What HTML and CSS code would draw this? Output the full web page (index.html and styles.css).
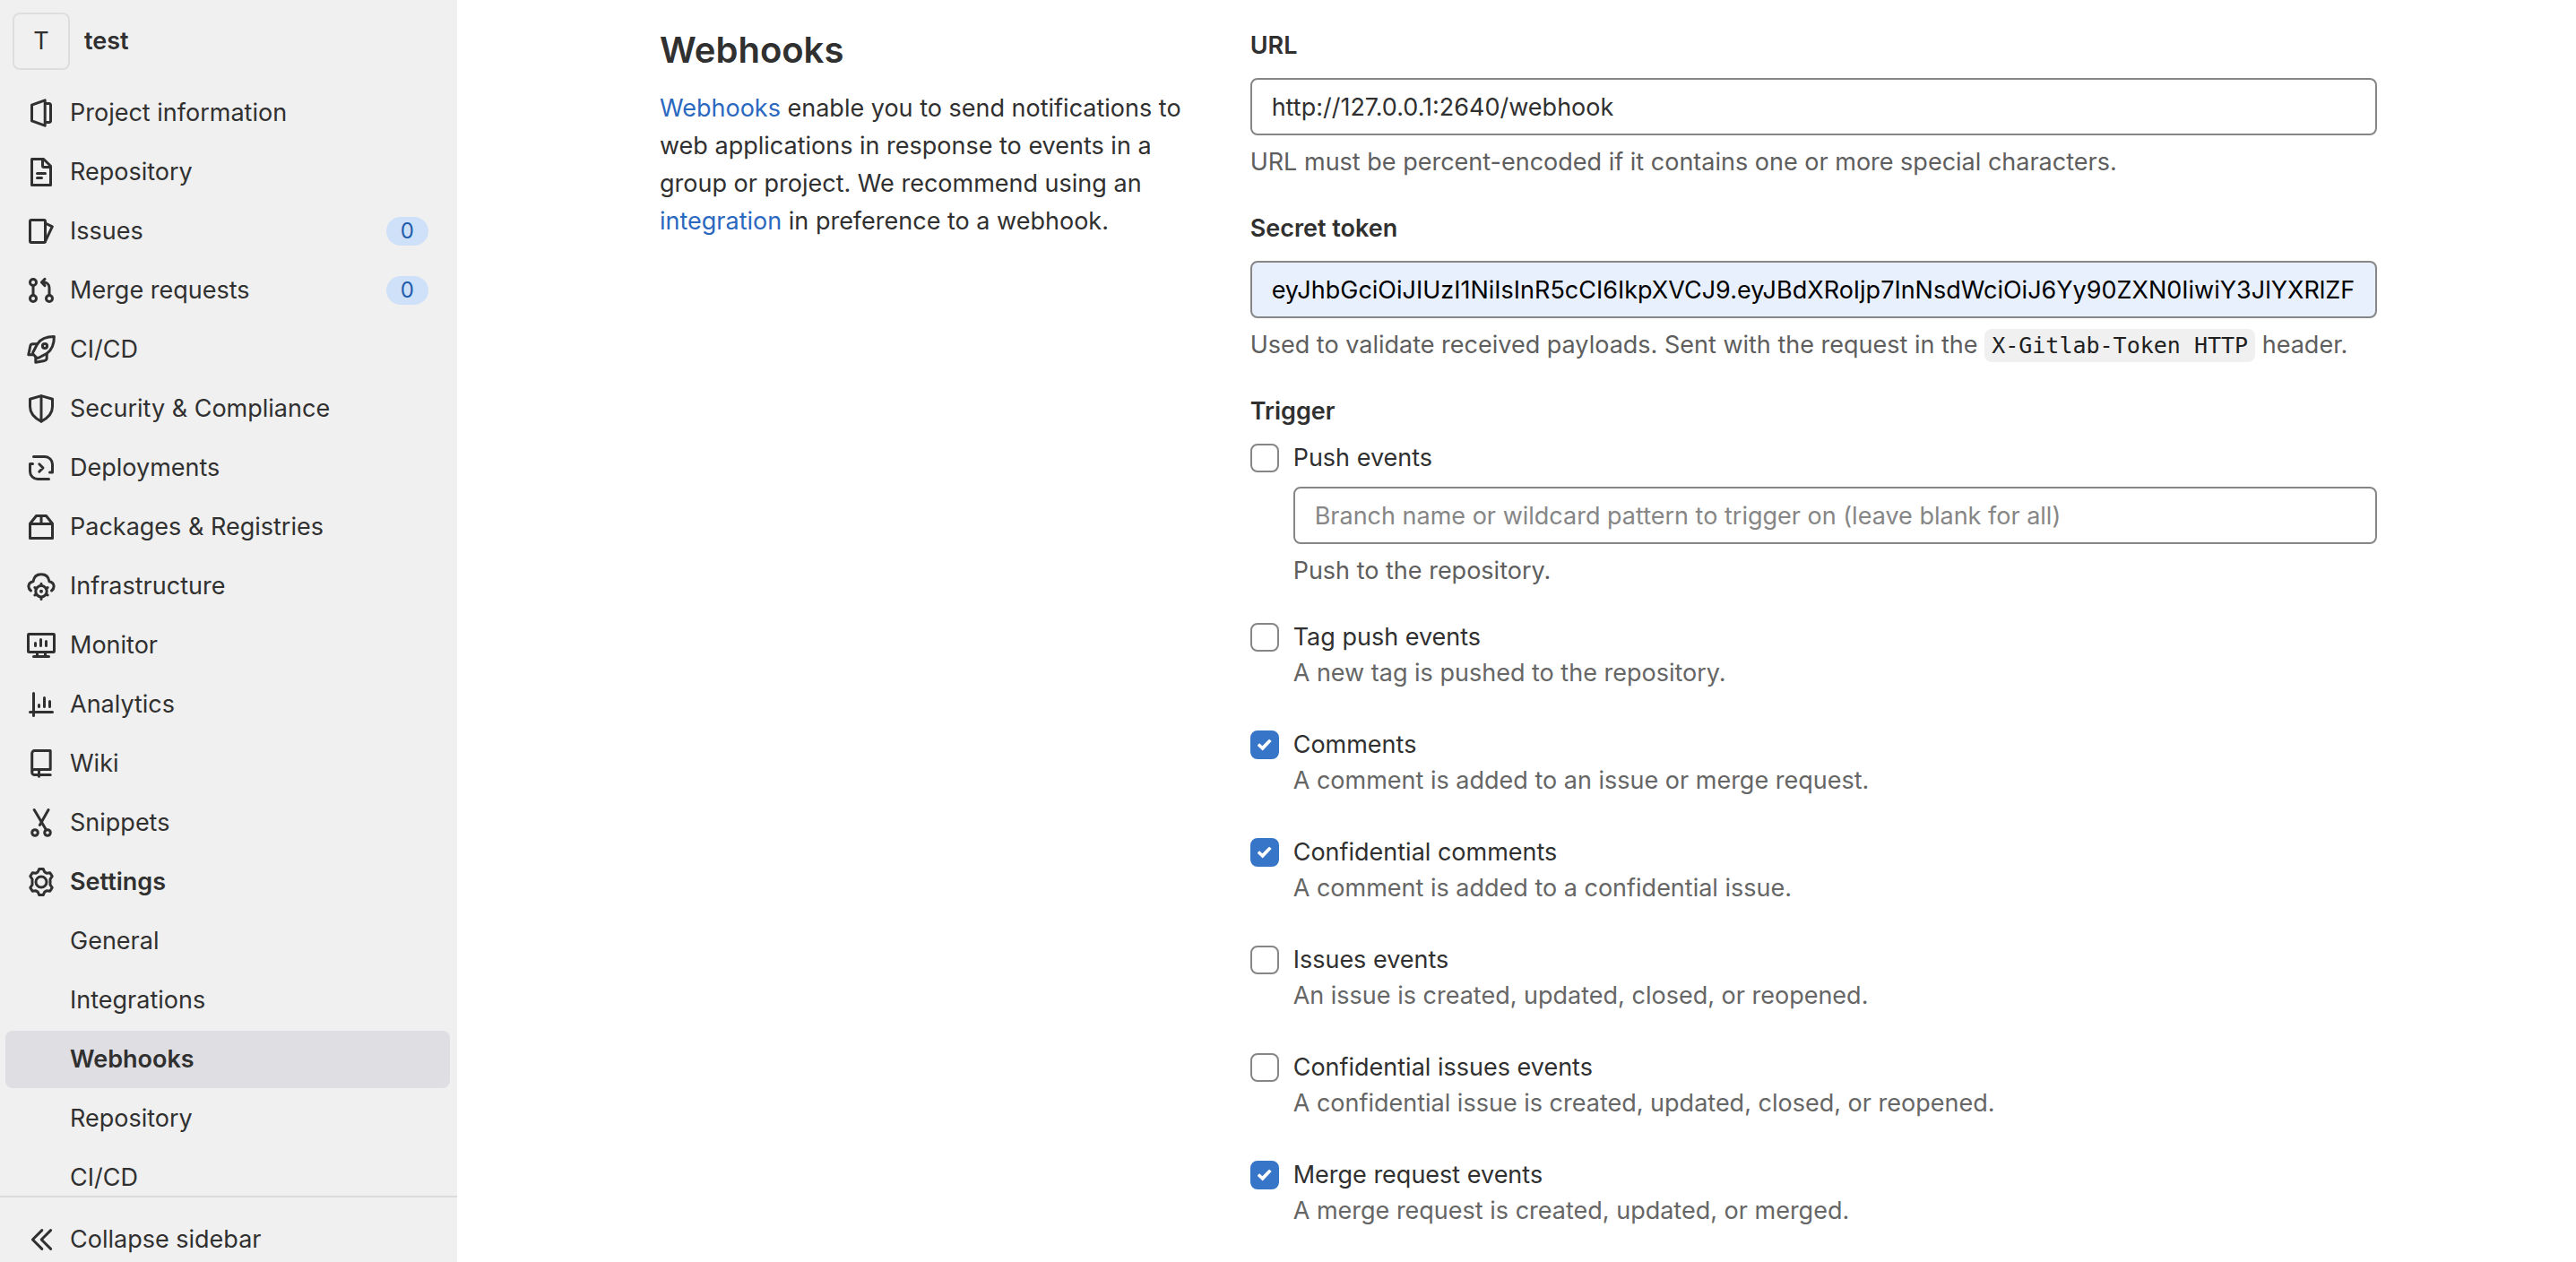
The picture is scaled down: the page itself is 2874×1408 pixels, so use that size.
FILE: index.html
```html
<!DOCTYPE html>
<html lang="en">
<head>
<meta charset="utf-8">
<title>Webhooks · test</title>
<link rel="stylesheet" href="styles.css">
</head>
<body>
<div class="page">
  <aside class="sidebar">
    <a class="project" href="#"><span class="avatar">T</span><span class="project-name">test</span></a>
    <nav class="nav" aria-label="Project navigation">
      <a class="nav-item" href="#"><svg class="icon" viewBox="0 0 16 16"><path d="M2.75 3.6v8.8L10.1 15.1V.9z"/><path d="M10.25 2.75H12.5a.75.75 0 0 1 .75.75v9a.75.75 0 0 1-.75.75h-2.25"/></svg><span>Project information</span></a>
      <a class="nav-item" href="#"><svg class="icon" viewBox="0 0 16 16"><path d="M2.75.75H9.3l3.95 3.9v10.6H2.75z"/><path d="M8.75 1v3.5c0 .4.3.75.75.75h3.5M5.75 8.75h4.5M5.75 11.25h2.5"/></svg><span>Repository</span></a>
      <a class="nav-item" href="#"><svg class="icon" viewBox="0 0 16 16"><rect x="1.75" y="1.75" width="8.5" height="12.5" rx=".75"/><path d="M10.25 3.5l3.9 1.9-3.9 8.3"/></svg><span>Issues</span><span class="badge">0</span></a>
      <a class="nav-item" href="#"><svg class="icon" viewBox="0 0 16 16"><circle cx="3.5" cy="3.5" r="1.75"/><circle cx="3.5" cy="12.5" r="1.75"/><circle cx="12.5" cy="12.5" r="1.75"/><path d="M3.5 5.25v5.5M12.5 10.75V6.5c0-1.7-1.3-3-3-3H8.4M10 1.7L8.2 3.5 10 5.3"/></svg><span>Merge requests</span><span class="badge">0</span></a>
      <a class="nav-item" href="#"><svg class="icon" viewBox="0 0 16 16"><path d="M15.2.8c-4.4 0-7.300 1-9.300 4L3.400 9.500c-.2.4-.2.8.100 1.100l1.900 1.900c.3.300.7.300 1.100.100l4.700-2.500C14.300 8 15.200 5.200 15.200.8z"/><circle cx="10" cy="6" r="1.300"/><path d="M5.900 4.900H3.300c-.7 0-1.200.4-1.400 1.100L.9 10.900h2.600M4.900 12.400v2.700l4.900-.9c.8-.2 1.300-.8 1.300-1.600v-2.400"/></svg><span>CI/CD</span></a>
      <a class="nav-item" href="#"><svg class="icon" viewBox="0 0 16 16"><path d="M8 .8l6.250 1.800v4.300c0 3.400-2.500 6.300-6.250 8.200-3.750-1.900-6.250-4.800-6.250-8.200V2.600z"/><path d="M8 1v14"/></svg><span>Security &amp; Compliance</span></a>
      <a class="nav-item" href="#"><svg class="icon" viewBox="0 0 16 16"><path d="M3.750 1.750H10c2.350 0 4.250 1.900 4.250 4.250v4.500h-1.500M12.250 14.250H6A4.250 4.250 0 0 1 1.750 10V5.750h1.500M6.900 5.900L9 8l-2.100 2.100"/></svg><span>Deployments</span></a>
      <a class="nav-item" href="#"><svg class="icon" viewBox="0 0 16 16"><path d="M1.750 6.250h12.500v8H1.750zM1.750 6.100l3.500-4.350h5.500l3.500 4.350M8 1.750v4.500"/></svg><span>Packages &amp; Registries</span></a>
      <a class="nav-item" href="#"><svg class="icon" viewBox="0 0 16 16"><path d="M2.200 10.500C.3 9 .500 6 3.500 5.400c.4-2.700 2.300-4 4.500-4s4.100 1.300 4.500 4c3 .6 3.200 3.600 1.300 5.100"/><circle cx="8" cy="10.900" r="3.100"/><path d="M8 6.600v1M8 14.200v1M4.400 8.800l.8.500M10.800 12.500l.8.500M4.400 13l.8-.5M10.800 9.300l.8-.5"/><circle class="solid" cx="8" cy="10.900" r="1"/></svg><span>Infrastructure</span></a>
      <a class="nav-item" href="#"><svg class="icon" viewBox="0 0 16 16"><rect x=".75" y="1.750" width="14.500" height="10" rx=".4"/><path d="M5.750 12v2M10.250 12v2M3.750 14.250h8.500M4.750 6.750v1.500M7.750 4.750v3.500M10.750 5.750v2.500"/></svg><span>Monitor</span></a>
      <a class="nav-item" href="#"><svg class="icon" viewBox="0 0 16 16"><path d="M3.750 1.750v12.500M1.750 12.250h12.500M6.750 8.250v1M9.750 4.250v5M12.750 6.250v3"/></svg><span>Analytics</span></a>
      <a class="nav-item" href="#"><svg class="icon" viewBox="0 0 16 16"><path d="M13.100 14.250H4.250a1.400 1.400 0 0 1-1.400-1.400V2.250c0-.8.600-1.500 1.400-1.500h8.850v10.500H4.250a1.400 1.400 0 0 0-1.400 1.400M6.750 11.500v3.600"/></svg><span>Wiki</span></a>
      <a class="nav-item" href="#"><svg class="icon" viewBox="0 0 16 16"><circle cx="4.500" cy="13.500" r="1.650"/><circle cx="11.500" cy="13.500" r="1.650"/><path d="M4.100.8l6.700 11.200M12 .8L7.200 9.200"/></svg><span>Snippets</span></a>
      <a class="nav-item nav-item-current" href="#"><svg class="icon" viewBox="0 0 16 16"><circle cx="8" cy="8" r="3"/><path d="M6.900.75h2.200l.8 1.700 1.100.650 1.900-.2 1.200 1.900-1.100 1.600v3.200l1.100 1.600-1.200 1.900-1.900-.2-1.100.650-.8 1.700H6.900l-.8-1.700L5 12.900l-1.900.2-1.200-1.900L3 9.600V6.400L1.900 4.800l1.200-1.900 1.900.2 1.100-.650z"/></svg><span>Settings</span></a>
      <a class="nav-item nav-sub" href="#">General</a>
      <a class="nav-item nav-sub" href="#">Integrations</a>
      <a class="nav-item nav-sub nav-item-current nav-item-active" href="#" aria-current="page">Webhooks</a>
      <a class="nav-item nav-sub" href="#">Repository</a>
      <a class="nav-item nav-sub" href="#">CI/CD</a>
    </nav>
    <button class="collapse" type="button"><svg class="icon" viewBox="0 0 16 16"><path d="M8.400 2.800L3.200 8l5.200 5.200M13.300 2.800L8.100 8l5.200 5.200"/></svg><span>Collapse sidebar</span></button>
  </aside>

  <main class="content">
    <div class="row">
      <section class="intro">
        <h1 class="title">Webhooks</h1>
        <p class="lead"><a class="link" href="#">Webhooks</a> enable you to send notifications to web applications in response to events in a group or project. We recommend using an <a class="link" href="#">integration</a> in preference to a webhook.</p>
      </section>

      <form class="form">
        <div class="field">
          <label class="label" for="url">URL</label>
          <input class="input" id="url" type="text" value="http://127.0.0.1:2640/webhook">
          <p class="help">URL must be percent-encoded if it contains one or more special characters.</p>
        </div>
        <div class="field">
          <label class="label" for="token">Secret token</label>
          <input class="input input-autofilled" id="token" type="text" value="eyJhbGciOiJIUzI1NiIsInR5cCI6IkpXVCJ9.eyJBdXRoIjp7InNsdWciOiJ6Yy90ZXN0IiwiY3JlYXRlZF9hdCI6">
          <p class="help">Used to validate received payloads. Sent with the request in the <code class="code">X-Gitlab-Token HTTP</code> header.</p>
        </div>
        <fieldset class="triggers">
          <legend class="legend">Trigger</legend>
          <div class="check check-push">
            <input class="box" type="checkbox" id="push">
            <label class="check-label" for="push">Push events</label>
            <div class="check-body">
              <input class="input" type="text" aria-label="Branch filter" placeholder="Branch name or wildcard pattern to trigger on (leave blank for all)">
              <p class="help">Push to the repository.</p>
            </div>
          </div>
          <div class="check">
            <input class="box" type="checkbox" id="tag">
            <label class="check-label" for="tag">Tag push events</label>
            <p class="check-help">A new tag is pushed to the repository.</p>
          </div>
          <div class="check">
            <input class="box" type="checkbox" id="comments" checked>
            <label class="check-label" for="comments">Comments</label>
            <p class="check-help">A comment is added to an issue or merge request.</p>
          </div>
          <div class="check">
            <input class="box" type="checkbox" id="conf-comments" checked>
            <label class="check-label" for="conf-comments">Confidential comments</label>
            <p class="check-help">A comment is added to a confidential issue.</p>
          </div>
          <div class="check">
            <input class="box" type="checkbox" id="issues">
            <label class="check-label" for="issues">Issues events</label>
            <p class="check-help">An issue is created, updated, closed, or reopened.</p>
          </div>
          <div class="check">
            <input class="box" type="checkbox" id="conf-issues">
            <label class="check-label" for="conf-issues">Confidential issues events</label>
            <p class="check-help">A confidential issue is created, updated, closed, or reopened.</p>
          </div>
          <div class="check">
            <input class="box" type="checkbox" id="merge" checked>
            <label class="check-label" for="merge">Merge request events</label>
            <p class="check-help">A merge request is created, updated, or merged.</p>
          </div>
        </fieldset>
      </form>
    </div>
  </main>
</div>
</body>
</html>
```
FILE: styles.css
```css
* { box-sizing: border-box; }

body {
  margin: 0;
  background: #fff;
  color: #303030;
  font-family: Inter, "Liberation Sans", sans-serif;
  font-size: 27px;
  line-height: 42px;
}

p, h1 { margin: 0; }

.page {
  display: grid;
  grid-template-columns: 510px 1fr;
  grid-template-rows: minmax(0, 1fr);
  height: 100vh;
}

/* Sidebar */
.sidebar {
  display: flex;
  flex-direction: column;
  min-height: 0;
  background: #f0f0f0;
}

.project {
  display: flex;
  align-items: center;
  gap: 16px;
  padding: 14px 14px 16px;
  color: inherit;
  text-decoration: none;
}

.avatar {
  display: flex;
  align-items: center;
  justify-content: center;
  width: 64px;
  height: 64px;
  border: 2px solid #dedede;
  border-radius: 8px;
}

.project-name { font-weight: 600; }

.nav {
  flex: 1;
  display: flex;
  flex-direction: column;
  gap: 2px;
  min-height: 0;
  padding: 0 8px 0 6px;
  overflow: hidden;
}

.nav-item {
  flex: none;
  display: flex;
  align-items: center;
  gap: 16px;
  height: 64px;
  padding: 0 24px;
  border-radius: 8px;
  color: inherit;
  text-decoration: none;
}

.nav-sub { padding-left: 72px; }
.nav-item-current { font-weight: 600; }
.nav-item-active { background: #dfdee3; }

.icon {
  flex: none;
  width: 32px;
  height: 32px;
  fill: none;
  stroke: #303030;
  stroke-width: 1.5;
  stroke-linecap: round;
  stroke-linejoin: round;
}

.solid { fill: #303030; stroke: none; }

.badge {
  margin-left: auto;
  padding: 0 16px;
  border-radius: 16px;
  background: #cfe1f8;
  color: #1f5cab;
  font-size: 24px;
  line-height: 32px;
}

.collapse {
  display: flex;
  gap: 16px;
  align-items: center;
  padding: 26px 30px 4px;
  border: 0;
  border-top: 2px solid #dbdbdb;
  background: none;
  color: inherit;
  font: inherit;
}

/* Content */
.content {
  padding: 30px 0 0 4px;
  overflow: auto;
}

.row {
  display: grid;
  grid-template-columns: 1fr 2fr;
  max-width: 1976px;
  margin: 0 auto;
}

.intro, .form { padding: 0 30px; }

.title {
  margin-bottom: 18px;
  font-size: 40px;
  font-weight: 600;
  line-height: 52px;
}

.link { color: #2b68bf; text-decoration: none; }

.field { margin-bottom: 32px; }

.label, .legend {
  display: block;
  font-weight: 600;
}

.label { margin-bottom: 15px; }

.input {
  display: block;
  width: 100%;
  height: 64px;
  padding: 0 22px;
  border: 2px solid #868686;
  border-radius: 8px;
  background: #fff;
  color: inherit;
  font: inherit;
}

.input::placeholder { color: #868686; opacity: 1; }

.input-autofilled {
  background: #e8effd;
  color: #000;
}

.help {
  margin-top: 9px;
  color: #5e5e5e;
}

.code {
  padding: 4px 8px;
  border-radius: 8px;
  background: #f0f0f0;
  color: #1f1f1f;
  font-family: "DejaVu Sans Mono", "Liberation Mono", monospace;
  font-size: 25px;
  line-height: 1;
}

.triggers {
  min-width: 0;
  margin: 0;
  padding: 0;
  border: 0;
}

.legend {
  margin-bottom: 11px;
  padding: 0;
}

.check {
  display: grid;
  grid-template-columns: 32px 1fr;
  column-gap: 16px;
  align-items: center;
  margin-bottom: 40px;
  line-height: 40px;
}

.check:last-child { margin-bottom: 0; }
.check-push { margin-bottom: 33px; }

.check-help, .check-body { grid-column: 2; }
.check-help { color: #666; }

.check-body {
  padding-top: 12px;
  line-height: 42px;
}

.box {
  display: grid;
  place-items: center;
  width: 32px;
  height: 32px;
  margin: 0;
  border: 2px solid #868686;
  border-radius: 8px;
  background: #fff;
  appearance: none;
}

.box:checked {
  border-color: #3775c8;
  background: #3775c8;
}

.box:checked::before {
  content: "";
  width: 16px;
  height: 13px;
  background: #fff;
  clip-path: polygon(0 56%, 15% 36%, 36% 60%, 84% 0, 100% 20%, 38% 100%);
}
```
